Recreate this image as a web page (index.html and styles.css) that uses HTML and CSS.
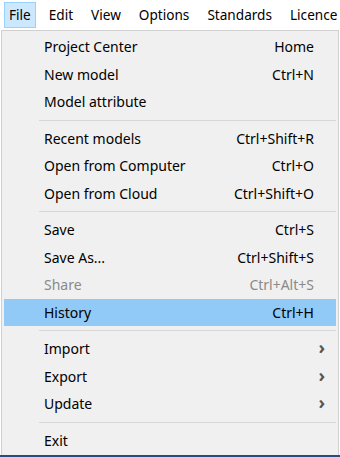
FILE: index.html
```html
<!DOCTYPE html>
<html lang="en">
<head>
    <meta charset="UTF-8">
    <title>File Menu</title>
    <link rel="stylesheet" href="styles.css">
</head>
<body>
    <div class="menubar">
        <span class="top open">File</span>
        <span class="top">Edit</span>
        <span class="top">View</span>
        <span class="top">Options</span>
        <span class="top">Standards</span>
        <span class="top">Licence</span>
    </div>

    <div class="menu">
        <div class="item"><span class="label">Project Center</span><span class="key">Home</span></div>
        <div class="item"><span class="label">New model</span><span class="key">Ctrl+N</span></div>
        <div class="item"><span class="label">Model attribute</span><span class="key"></span></div>
        <div class="sep"></div>
        <div class="item"><span class="label">Recent models</span><span class="key">Ctrl+Shift+R</span></div>
        <div class="item"><span class="label">Open from Computer</span><span class="key">Ctrl+O</span></div>
        <div class="item"><span class="label">Open from Cloud</span><span class="key">Ctrl+Shift+O</span></div>
        <div class="sep"></div>
        <div class="item"><span class="label">Save</span><span class="key">Ctrl+S</span></div>
        <div class="item"><span class="label">Save As...</span><span class="key">Ctrl+Shift+S</span></div>
        <div class="item disabled"><span class="label">Share</span><span class="key">Ctrl+Alt+S</span></div>
        <div class="item active"><span class="label">History</span><span class="key">Ctrl+H</span></div>
        <div class="sep"></div>
        <div class="item"><span class="label">Import</span><span class="arrow">&#x203A;</span></div>
        <div class="item"><span class="label">Export</span><span class="arrow">&#x203A;</span></div>
        <div class="item"><span class="label">Update</span><span class="arrow">&#x203A;</span></div>
        <div class="sep"></div>
        <div class="item"><span class="label">Exit</span><span class="key"></span></div>
    </div>
    <div class="taskbar"></div>
</body>
</html>
```

FILE: styles.css
```css
* {
    margin: 0;
    padding: 0;
    box-sizing: border-box;
}
body {
    width: 340px;
    height: 457px;
    overflow: hidden;
    background-color: #ffffff;
    font-family: "Noto Sans", "Open Sans", sans-serif;
    font-size: 14px;
    color: #000000;
    display: flex;
    flex-direction: column;
}
.menubar {
    height: 30px;
    display: flex;
    align-items: center;
    padding: 0 0 0 4px;
    white-space: nowrap;
    overflow: hidden;
    background-color: #ffffff;
    font-size: 13.6px;
}
.top {
    padding: 2px 4px 3px 4px;
    margin-right: 8px;
    border: 1px solid transparent;
}
.top.open {
    background-color: #cce8ff;
    border-color: #99d1ff;
}
.menu {
    flex: 1;
    margin: 0 1px 0 1px;
    padding: 2px 2px 0 2px;
    background-color: #f0f0f0;
    border: 1px solid #d0d0d0;
    border-bottom: none;
}
.item {
    height: 27.5px;
    display: flex;
    align-items: center;
    padding: 0 22px 0 40px;
    white-space: nowrap;
}
.label {
    flex: 1;
}
.key {
    text-align: right;
}
.arrow {
    font-size: 18px;
    font-weight: bold;
    color: #555555;
    margin-right: -11px;
    line-height: 1;
    padding-bottom: 3px;
}
.item.disabled {
    color: #8a8a8a;
}
.item.active {
    background-color: #91c9f7;
}
.sep {
    height: 9px;
    margin-left: 35px;
    display: flex;
    align-items: center;
}
.sep::before {
    content: "";
    display: block;
    width: 100%;
    height: 1px;
    background-color: #d7d7d7;
}
.taskbar {
    height: 2px;
    background-color: #2b4a7e;
}
```
